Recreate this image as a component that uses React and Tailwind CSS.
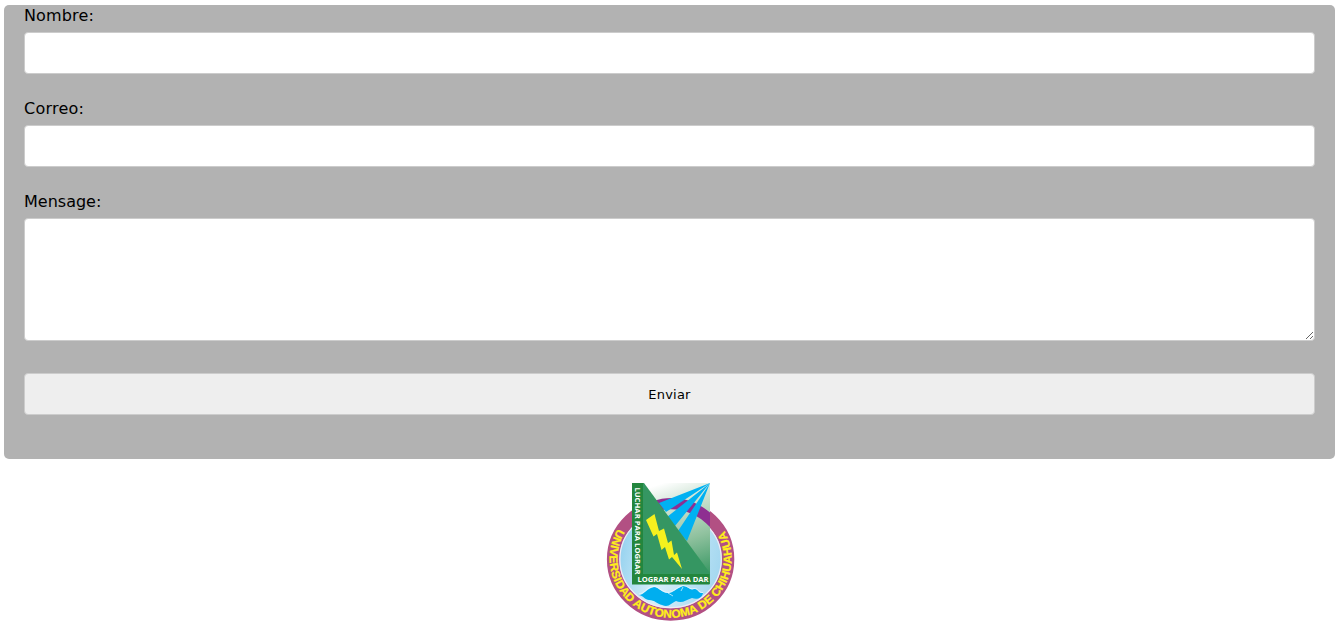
function Field({ label, labelClass = "", children }) {
  return (
    <div className="flex flex-col">
      <label className={`h-[27px] pt-px text-base leading-5 ${labelClass}`}>{label}</label>
      {children}
    </div>
  );
}

const control = "block w-full rounded-[4px] border border-[#cccccc] bg-white px-3 outline-none";

function UniversityLogo() {
  return (
    <svg className="h-[150px] w-[140px]" viewBox="0 0 140 150" role="img" aria-label="Universidad Autonoma de Chihuahua">
      <defs>
        <linearGradient id="sky" x1="0" y1="0" x2="1" y2="0.2">
          <stop offset="0" stopColor="#7fc8eb" />
          <stop offset="0.5" stopColor="#d8effa" />
          <stop offset="1" stopColor="#a5d8f0" />
        </linearGradient>
        <linearGradient id="panel" x1="0.4" y1="0" x2="0.65" y2="1">
          <stop offset="0" stopColor="#ffffff" />
          <stop offset="0.2" stopColor="#d5e7da" />
          <stop offset="0.6" stopColor="#8fc19e" />
          <stop offset="1" stopColor="#359661" />
        </linearGradient>
        <path id="ring-text" d="M19 51 A61 59.2 0 1 0 122.2 51" />
      </defs>
      <ellipse cx="70.6" cy="83.3" rx="57.5" ry="55.2" fill="url(#sky)" stroke="#b25083" strokeWidth="12.4" />
      <ellipse cx="70.6" cy="83.3" rx="50.7" ry="48.4" fill="none" stroke="#f3eaf3" strokeWidth="1.2" />
      <path d="M32 7H110V108H32Z" fill="url(#panel)" />
      <path d="M52 25.5C73 18 94 23 110 36.5V51C96 36 76 30 57 35Z" fill="#8e2f91" />
      <path d="M110 7L59 27L66 36ZM110 7L67 41L75 50ZM110 7L78 55L87 65Z" fill="#00b1f2" />
      <path d="M33 7H44L110 97V108H33Z" fill="#369961" />
      <path d="M32 7H43V98H109.5V108.5H32Z" fill="#23863d" />
      <path d="M43 97V7L109.5 97.5Z" fill="#359662" />
      <path d="M54.5 38L46 44L53.5 60.5L57 58L61.5 74L65 71L69 83.5L72 81L82 93L77 76.5L74 79L71.5 64.5L68 67L64 52.5L59 55Z" fill="#f5f11e" />
      <path d="M39 119C44 119 47 112 54 111C59 111 61 117 68 117C73 117 77 112 83 110C88 110 90 115 94 113C98 112 98 118 103 117C102 122 97 124 92 122C86 124 82 128 76 125C71 127 69 132 62 129C57 128 55 124 49 124C45 124 44 120 39 119Z" fill="#00aeef" />
      <path d="M39 118C44 118 47 111 54 110.5C59 110.5 61 116 68 116.5C73 116.5 77 111 83 109.5C88 110 90 114 94 112.5C98 111.5 98 117 103 116.5M68 117L73 120M83 111L81 115" fill="none" stroke="#eef9ff" strokeWidth="0.7" />
      <text transform="translate(34.9 11.5) rotate(90)" textLength="87" lengthAdjust="spacingAndGlyphs" fontFamily="Open Sans, sans-serif" fontSize="7" fontWeight="700" fill="#fff">LUCHAR PARA LOGRAR</text>
      <text x="37.5" y="105.8" textLength="71" lengthAdjust="spacingAndGlyphs" fontFamily="Open Sans, sans-serif" fontSize="7" fontWeight="700" fill="#fff">LOGRAR PARA DAR</text>
      <text fontFamily="Liberation Sans, sans-serif" fontSize="11.5" fontWeight="700" fill="#fff019" stroke="#fff019" strokeWidth="0.25" textLength="249" lengthAdjust="spacingAndGlyphs">
        <textPath href="#ring-text" startOffset="2" textLength="249" lengthAdjust="spacingAndGlyphs">UNIVERSIDAD AUTONOMA DE CHIHUAHUA</textPath>
      </text>
    </svg>
  );
}

export default function App() {
  return (
    <main className="flex min-h-[626px] flex-col bg-white pt-[5px] pr-2 pl-1 font-['DejaVu_Sans',sans-serif] text-black">
      <form className="flex h-[454px] flex-col rounded-[5px] bg-[#b2b2b2] px-5" onSubmit={(e) => e.preventDefault()}>
        <div className="flex flex-col gap-6">
          <Field label="Nombre:" labelClass="tracking-[0.15px]">
            <input aria-label="Nombre" className={`${control} h-[42px]`} />
          </Field>
          <Field label="Correo:" labelClass="tracking-[0.25px]">
            <input aria-label="Correo" className={`${control} h-[42px]`} />
          </Field>
          <Field label="Mensage:">
            <textarea aria-label="Mensage" className={`${control} h-[123px] resize`} />
          </Field>
        </div>
        <button className="mt-8 h-[42px] w-full rounded-[4px] border border-[#cccccc] bg-[#eeeeee] pt-0.5 text-[13px] tracking-[0.2px]">Enviar</button>
      </form>
      <div className="mt-[17px] flex pl-[596px]">
        <UniversityLogo />
      </div>
    </main>
  );
}
